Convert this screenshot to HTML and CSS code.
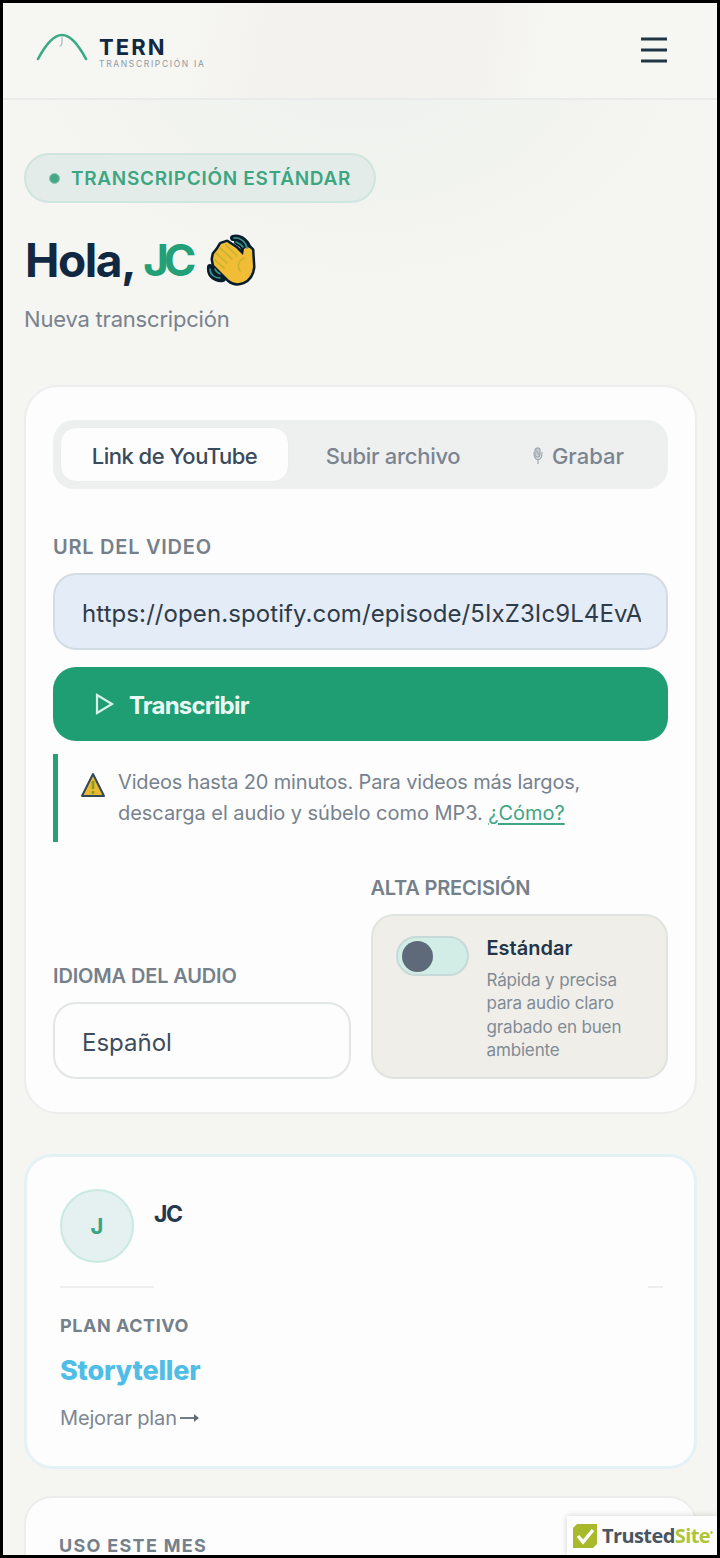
FILE: index.html
```html
<!DOCTYPE html>
<html lang="es">
<head>
<meta charset="utf-8">
<title>TERN</title>
<link rel="stylesheet" href="styles.css">
</head>
<body>
<header class="topbar">
  <div class="brand">
    <svg class="brand-mark" width="52" height="28" viewBox="0 0 52 28" fill="none" stroke-linecap="round">
      <path d="M2 26C11 9 19 2 26 2s15 7 24 24" stroke="#3aaa84" stroke-width="2.6"/>
      <path d="M26 4.500v5q0 2.500-2 3.500" stroke="#a9bec0" stroke-width="1.300"/>
    </svg>
    <div class="brand-text">
      <span class="brand-name">TERN</span>
      <span class="brand-sub">TRANSCRIPCIÓN IA</span>
    </div>
  </div>
  <svg class="menu" width="28" height="28" viewBox="0 0 28 28" stroke="#213547" stroke-width="3.200"><path d="M1 3h26M1 14h26M1 25h26"/></svg>
</header>
<main class="page">
  <div class="pill"><i class="pill-dot"></i><span class="pill-text">TRANSCRIPCIÓN ESTÁNDAR</span></div>
  <h1 class="greeting"><span class="hello">Hola,</span><span class="user">JC</span>
    <svg class="wave" width="52" height="54" viewBox="0 0 52 54" fill="none" stroke-linecap="round" stroke-linejoin="round">
      <path d="M27 5c8-2 15 5 16 12M31 9q5 2 7 7M4 34c-1 9 6 13 13 12M9 34q1 6 6 8" stroke="#071c2d" stroke-width="6"/>
      <path d="M8 21l4-5 3-5 6-2 9 6 7 7 1-6q4-4 8 1l1 17q-1 11-10 15-8 3-14-2L8 32l-1-6z" fill="#f2bd36" stroke="#071c2d" stroke-width="5"/>
      <path d="M8 21l4-5 3-5 6-2 9 6 7 7 1-6q4-4 8 1l1 17q-1 11-10 15-8 3-14-2L8 32l-1-6z" fill="#f2bd36"/>
      <path d="M10 20l11 10M14 15l12 11M20 12l11 11M9 27l9 8M38 25c-6 3-7 8-4 13" stroke="#c9b62f" stroke-width="1.700"/>
      <path d="M28 5c6-1 12 4 13 10M30 9q5 2 7 5M4 36c0 6 5 9 10 9M9 36q1 3 5 5" stroke="#3b9487" stroke-width="1.600"/>
    </svg>
  </h1>
  <p class="lead">Nueva transcripción</p>

  <section class="card form-card">
    <nav class="tabs">
      <span class="tab tab-active">Link de YouTube</span>
      <span class="tab tab-upload">Subir archivo</span>
      <span class="tab tab-record"><svg width="10" height="18" viewBox="0 0 10 18" fill="none" stroke="#a3acb3" stroke-width="1.300"><rect x="2" y="1" width="5" height="9" rx="2.500" fill="#cbd0d3"/><path d="M1 5c0 10 8 10 8 0M5 12v5M3 3l3 5"/></svg>Grabar</span>
    </nav>
    <div class="label label-url">URL DEL VIDEO</div>
    <div class="field field-url"><span class="url">https://open.spotify.com/episode/5IxZ3Ic9L4EvA</span></div>
    <div class="submit"><svg width="20" height="24" viewBox="0 0 20 24" fill="none" stroke="#d9f1e8" stroke-width="2.200"><path d="M2 3v18l15-9z"/></svg><span class="submit-text">Transcribir</span></div>
    <div class="note">
      <svg class="warn" width="26" height="26" viewBox="0 0 26 26"><path d="M13 2L24 24H2z" fill="#e9b934" stroke="#33475a" stroke-width="2" stroke-linejoin="round"/><path d="M13 9v8M13 19v3" stroke="#879c25" stroke-width="2.600"/></svg>
      <p class="note-text"><span class="note-a">Videos hasta 20 minutos. Para videos más largos,</span><br><span class="note-b">descarga el audio y súbelo como MP3. <a class="link">¿Cómo?</a></span></p>
    </div>
    <div class="options">
      <div class="option">
        <div class="label label-lang">IDIOMA DEL AUDIO</div>
        <div class="field"><span class="lang">Español</span></div>
      </div>
      <div class="option">
        <div class="label label-prec">ALTA PRECISIÓN</div>
        <div class="precision">
          <div class="switch"><i class="knob"></i></div>
          <div class="precision-text">
            <strong class="mode">Estándar</strong>
            <p class="mode-desc">Rápida y precisa<br>para audio claro<br>grabado en buen<br>ambiente</p>
          </div>
        </div>
      </div>
    </div>
  </section>

  <section class="card plan-card">
    <div class="profile"><div class="avatar">J</div><div class="name">JC</div></div>
    <div class="rule"><i class="rule-left"></i><i class="rule-right"></i></div>
    <div class="caption caption-plan">PLAN ACTIVO</div>
    <div class="plan">Storyteller</div>
    <div class="upgrade"><span>Mejorar plan</span><svg width="20" height="12" viewBox="0 0 20 12" fill="none" stroke="#5f6c79" stroke-width="1.800"><path d="M0 6h17"/><path d="M14 2l5 4-5 4z" fill="#5f6c79" stroke="none"/></svg></div>
  </section>

  <section class="card usage-card"><div class="caption caption-use">USO ESTE MES</div></section>
</main>
<aside class="trust">
  <svg width="24" height="24" viewBox="0 0 24 24"><path d="M4 0h20v20l-4 4H0V4z" fill="#a8b92b"/><path d="M5 12l5 6 10-12" fill="none" stroke="#fff" stroke-width="3.400"/></svg>
  <span class="trust-text">Trusted<b class="trust-site">Site</b><sup class="trust-mark">•</sup></span>
</aside>
</body>
</html>
```

FILE: styles.css
```css
* { box-sizing: border-box; margin: 0; padding: 0; }
html { background: #000; }
body {
  position: relative;
  width: 720px;
  height: 1558px;
  border: 3px solid #000;
  overflow: hidden;
  background: radial-gradient(ellipse 330px 240px at 357px 40px, #edf1ed 0%, #f5f5f1 100%) no-repeat padding-box #f5f5f1;
  font-family: Inter, "Noto Sans", sans-serif;
  color: #102841;
  white-space: nowrap;
}
svg { display: block; flex: none; }
i { display: block; }

.topbar {
  height: 97px;
  padding: 0 49px 0 33px;
  border-bottom: 2px solid #e9eaea;
  background: linear-gradient(100deg, #f6f6f2 25%, #f3f2ee 38%, #f3f2ee 66%, #f6f6f2 76%) padding-box #f5f5f1;
  display: flex;
  justify-content: space-between;
}
.brand { display: flex; gap: 11px; padding-top: 30px; }
.brand-text { display: flex; flex-direction: column; padding-top: 2px; }
.brand-name { font: 700 22px/25px Inter, sans-serif; letter-spacing: 2.1px; }
.brand-sub { font: 400 8.500px/8px Inter, sans-serif; letter-spacing: 1.650px; color: #8f99a2; }
.menu { margin-top: 33px; }

.page { padding: 53px 20px 0 21px; }
.pill {
  width: 352px; height: 50px;
  padding-left: 23px;
  border: 2px solid #cfe5df;
  border-radius: 25px;
  background: #e4ecea;
  display: flex; align-items: center; gap: 11px;
}
.pill-dot { width: 11px; height: 11px; border: 1px solid #8dc7b4; border-radius: 50%; background: #46a887; }
.pill-text { font-size: 19px; font-weight: 600; letter-spacing: .7px; color: #3da681; }
.greeting { display: flex; align-items: center; height: 56px; margin-top: 29px; font-size: 46px; font-weight: 700; letter-spacing: -1.4px; }
.hello { padding-left: 1px; }
.user { color: #22a077; margin-left: 8px; font-size: 44px; letter-spacing: -5px; }
.wave { margin-left: 15px; }
.lead { margin-top: 16px; font-size: 22px; line-height: 30px; letter-spacing: -.2px; color: #78838e; }

.card { width: 673px; border: 2px solid #eceeee; background: #fcfdfc; }
.form-card { height: 729px; margin-top: 51px; padding: 33px 27px 0 27px; border-radius: 34px; }
.tabs { display: flex; height: 69px; padding: 7px; border-radius: 21px; background: #eef0f0; }
.tab { display: flex; align-items: center; justify-content: center; padding-top: 2px; font-size: 22px; font-weight: 500; color: #7b8590; }
.tab-active { width: 229px; border: 1px solid #eaecef; border-radius: 16px; background: #fdfdfd; color: #3a4a5b; letter-spacing: -.5px; }
.tab-upload { width: 208px; letter-spacing: -.3px; }
.tab-record { width: 163px; gap: 9px; }
.label { position: relative; top: 1px; font-size: 20px; line-height: 26px; font-weight: 600; color: #75808b; }
.label-url { margin-top: 44px; letter-spacing: .75px; }
.label-lang { letter-spacing: -.15px; }
.label-prec { letter-spacing: -.2px; }
.field { height: 77px; margin-top: 14px; padding: 3px 27px 0; border: 2px solid #e3e6e6; border-radius: 23px; display: flex; align-items: center; font-size: 24px; color: #3e4c5b; }
.field-url { padding: 4px 25px 0 27px; border-color: #d3dce3; background: #e4ecf8; color: #2e3b48; }
.url { width: 560px; overflow: hidden; letter-spacing: .09px; }
.submit { height: 74px; margin-top: 17px; padding-left: 42px; border-radius: 23px; background: #1f9e74; display: flex; align-items: center; gap: 14px; color: #e9f8f2; }
.submit-text { padding-top: 2px; font-size: 24px; font-weight: 700; letter-spacing: -.8px; }
.note { height: 88px; margin-top: 13px; padding: 13px 0 0 22px; border-left: 5px solid #25a078; display: flex; gap: 12px; color: #77828e; }
.warn { margin-top: 5px; }
.note-text { font-size: 20px; line-height: 31px; letter-spacing: -.16px; }
.note-b { letter-spacing: -.04px; }
.link { color: #3ea684; text-decoration: underline; text-underline-offset: 3px; }
.options { display: flex; align-items: flex-end; gap: 20px; height: 237px; }
.option { width: 298px; }
.precision { display: flex; gap: 18px; height: 165px; margin-top: 14px; padding: 20px 0 0 23px; border: 2px solid #dfe4e0; border-radius: 23px; background: #f0eee8; }
.switch { flex: none; width: 73px; height: 40px; padding: 3px 4px; border: 2px solid #c6dbd9; border-radius: 20px; background: #d1ede6; }
.knob { width: 31px; height: 31px; border-radius: 50%; background: #5e6a7a; }
.mode { display: block; font-size: 20px; line-height: 25px; font-weight: 600; color: #22364a; }
.mode-desc { margin-top: 8px; font-size: 17px; line-height: 23.400px; letter-spacing: -.15px; color: #808b96; }

.plan-card { height: 315px; margin-top: 40px; padding: 32px 33px 0 33px; border: 3px solid #e4f2f6; border-radius: 28px; }
.profile { display: flex; gap: 20px; }
.avatar { width: 74px; height: 74px; border: 2px solid #c9e9e1; border-radius: 50%; background: #e5f1f1; display: flex; align-items: center; justify-content: center; font-size: 22px; font-weight: 700; color: #38a481; }
.name { padding-top: 11px; font-size: 23px; line-height: 28px; font-weight: 700; letter-spacing: -1.500px; color: #25394d; }
.rule { display: flex; justify-content: space-between; height: 2px; margin-top: 23px; width: 603px; }
.rule-left { width: 94px; background: #eeefef; }
.rule-right { width: 15px; background: #eeefed; }
.caption { font-size: 18px; line-height: 24px; font-weight: 700; color: #75808b; }
.caption-plan { margin-top: 26px; letter-spacing: .55px; }
.plan { margin-top: 14px; font-size: 27px; line-height: 38px; font-weight: 800; letter-spacing: -.2px; color: #50bde6; }
.upgrade { display: flex; align-items: center; gap: 3px; margin-top: 14px; font-size: 20px; line-height: 28px; letter-spacing: -.15px; color: #7c8791; }
.usage-card { height: 120px; margin-top: 27px; padding: 36px 33px 0; border-radius: 28px; }
.caption-use { letter-spacing: 1.3px; }

.trust { position: absolute; right: 0; bottom: 0; width: 150px; height: 39px; padding: 0 0 0 6px; background: #fdfdfd; box-shadow: 0 0 6px rgba(0, 0, 0, .18); display: flex; align-items: center; gap: 5px; }
.trust-text { font: 700 20px/24px "Open Sans", sans-serif; letter-spacing: -.6px; color: #4a5562; }
.trust-site { color: #b0c536; font-weight: 700; }
.trust-mark { font-size: 8px; line-height: 0; vertical-align: 7px; color: #b0c536; }
```
